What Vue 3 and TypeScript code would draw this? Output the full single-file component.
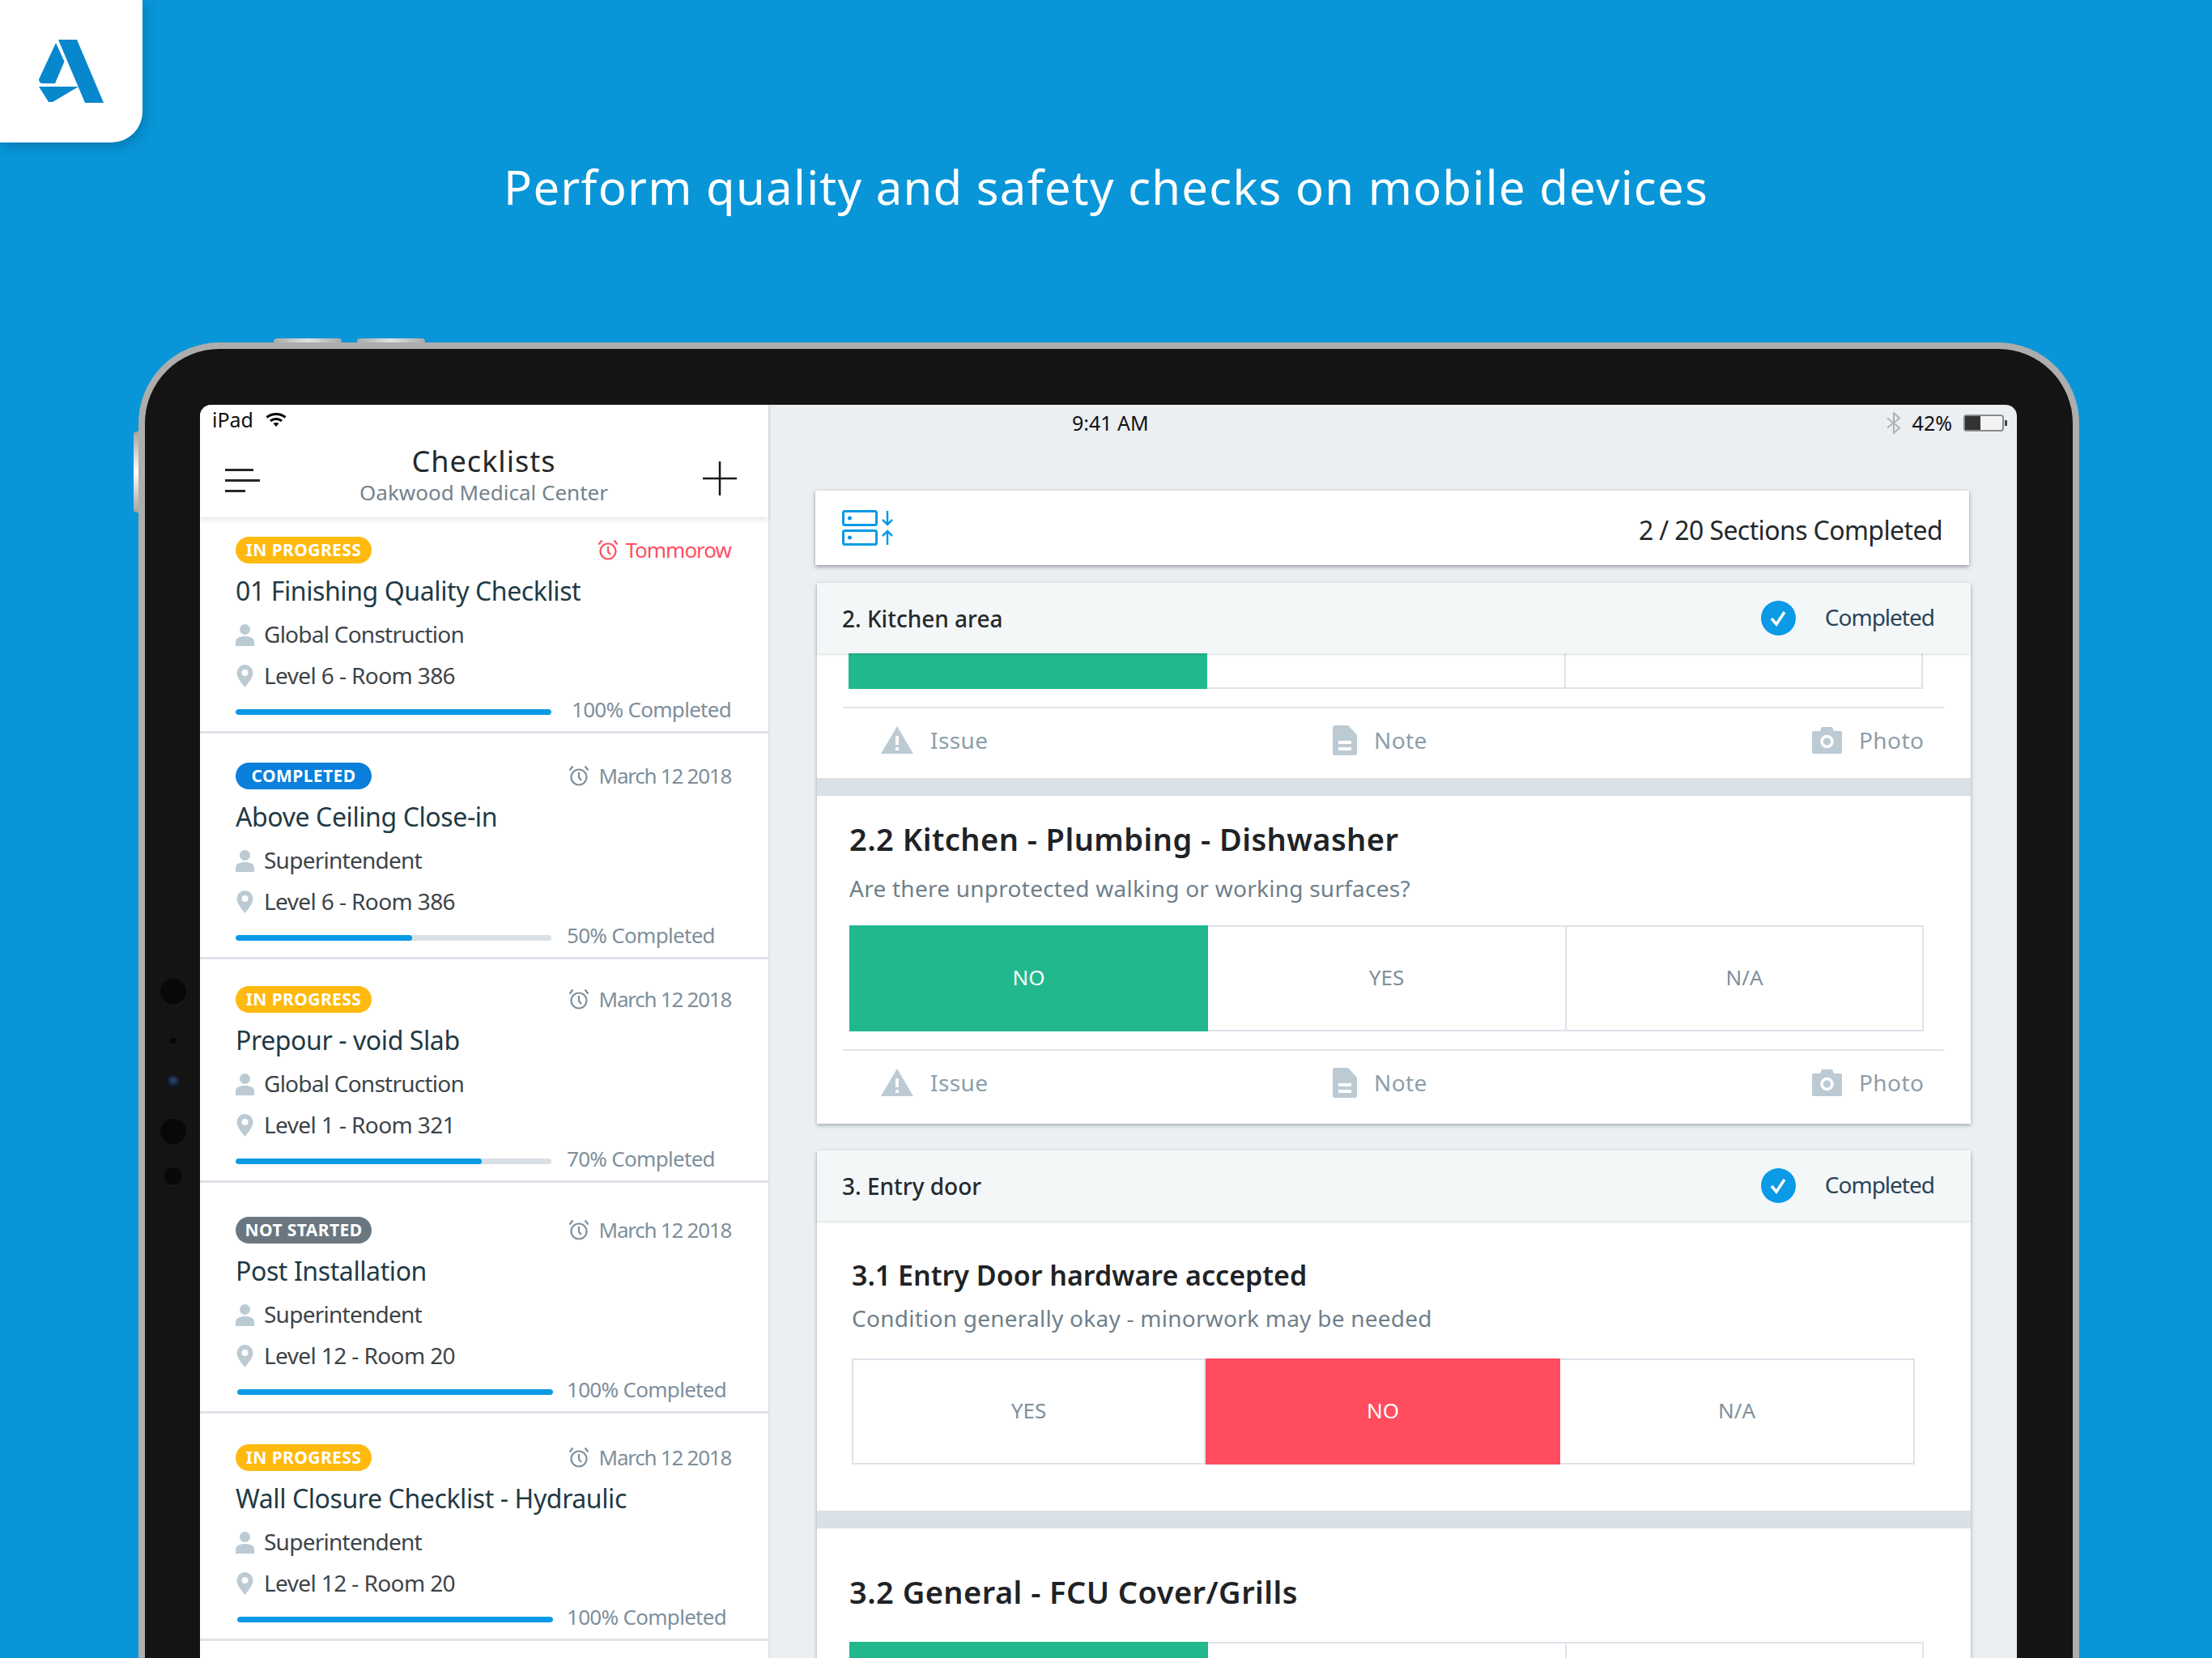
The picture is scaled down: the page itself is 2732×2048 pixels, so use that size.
<template>
  <div class="page">
    <div class="logo-card">
      <svg viewBox="0 0 176 176" width="176" height="176">
        <path d="M72 49H95L128 127H105Z" fill="#0787cc" />
        <path d="M69 53L79.500 76L68 103H53Q48 103 48 98Z" fill="#0787cc" />
        <path d="M48 107H97L65 126H60Z" fill="#0787cc" />
      </svg>
    </div>

    <h1 class="headline">Perform quality and safety checks on mobile devices</h1>

    <div class="device">
      <span class="hw-btn hw-btn-a"></span>
      <span class="hw-btn hw-btn-b"></span>
      <span class="hw-side"></span>
      <span class="dot dot-a"></span>
      <span class="dot dot-b"></span>
      <span class="dot dot-c"></span>
      <span class="dot dot-d"></span>
      <span class="dot dot-e"></span>

      <div class="screen">
        <div class="status">
          <div class="status-left">
            <span>iPad</span>
            <svg width="26" height="18" viewBox="0 0 26 18" fill="none" stroke="#000" stroke-width="3">
              <path d="M1.500 6.500C8 1 18 1 24.500 6.500" />
              <path d="M6 11C10 7.500 16 7.500 20 11" />
              <path d="M13 18L9.500 14C11.500 12.500 14.500 12.500 16.500 14Z" fill="#000" stroke="none" />
            </svg>
          </div>
          <div class="status-time">9:41 AM</div>
          <div class="status-right">
            <svg width="18" height="27" viewBox="0 0 18 27" fill="none" stroke="#aeb2b5" stroke-width="2">
              <path d="M1 7.500L16 19.500L9 26V1L16 7.500L1 19.500" />
            </svg>
            <span>42%</span>
            <div class="battery"><span class="battery-fill"></span></div>
          </div>
        </div>

        <aside class="list-panel">
          <header class="list-head">
            <div class="menu-icon">
              <span class="m1"></span>
              <span class="m2"></span>
              <span class="m3"></span>
            </div>
            <div class="list-titles">
              <div class="list-title">Checklists</div>
              <div class="list-sub">Oakwood Medical Center</div>
            </div>
            <svg class="plus" width="42" height="42" viewBox="0 0 42 42" stroke="#15191c" stroke-width="2.500">
              <path d="M21 0V42M0 21H42" />
            </svg>
          </header>

          <div
            v-for="item in checklists"
            :key="item.title"
            class="row"
            :style="{ paddingTop: item.pad + 'px' }"
          >
            <div class="row-top">
              <span class="badge" :class="item.state">{{ item.label }}</span>
              <span class="due" :class="{ late: item.late }">
                <svg width="26" height="26" viewBox="0 0 26 26" fill="none" stroke="currentColor" stroke-width="2.200">
                  <circle cx="13" cy="15" r="9.500" />
                  <path d="M13 9V15.500L16 19" />
                  <path d="M1.500 6.500L5.500 1.500M24.500 6.500L20.500 1.500" />
                </svg>
                {{ item.due }}
              </span>
            </div>
            <div class="row-title">{{ item.title }}</div>
            <div class="meta owner">
              <svg width="23" height="27" viewBox="0 0 23 27" fill="#bccad4">
                <circle cx="11.500" cy="6.500" r="6.500" />
                <path d="M0 27V22C0 17 5 15 11.500 15S23 17 23 22V27Z" />
              </svg>
              <span>{{ item.owner }}</span>
            </div>
            <div class="meta">
              <svg width="23" height="28" viewBox="0 0 23 28">
                <path
                  d="M11.500 28C7 22 1.500 16 1.500 10A10 10 0 0 1 21.500 10C21.500 16 16 22 11.500 28Z"
                  fill="#bccad4"
                />
                <circle cx="11.500" cy="10" r="4" fill="#fff" />
              </svg>
              <span>{{ item.place }}</span>
            </div>
            <div class="progress-row" :class="{ shifted: item.shifted }">
              <div class="track"><div class="fill" :style="{ width: item.fill + '%' }"></div></div>
              <span class="pct" :class="{ wide: item.wideGap }">{{ item.pct }}</span>
            </div>
          </div>
        </aside>

        <main class="detail">
          <div class="summary">
            <svg width="63" height="44" viewBox="0 0 63 44" fill="none" stroke="#0a9ae6" stroke-width="2.500">
              <rect x="1.500" y="1.500" width="41" height="17" rx="2" stroke-width="3" />
              <rect x="1.500" y="25.500" width="41" height="17" rx="2" stroke-width="3" />
              <circle cx="9.500" cy="10" r="2.500" fill="#0a9ae6" stroke="none" />
              <circle cx="9.500" cy="34" r="2.500" fill="#0a9ae6" stroke="none" />
              <path d="M56 1V18M50 12L56 18L62 12" />
              <path d="M56 43V26M50 32L56 26L62 32" />
            </svg>
            <span class="summary-text">2 / 20 Sections Completed</span>
          </div>

          <section class="card kitchen">
            <div class="card-head">
              <span class="card-name">2. Kitchen area</span>
              <span class="done-icon">
                <svg width="43" height="43" viewBox="0 0 43 43">
                  <circle cx="21.500" cy="21.500" r="21.500" fill="#0a9ae6" />
                  <path d="M13 22L19 29L29 14" fill="none" stroke="#fff" stroke-width="3.500" />
                </svg>
              </span>
              <span class="done-text">Completed</span>
            </div>

            <div class="options options-stub">
              <div class="opt green"></div>
              <div class="opt"></div>
              <div class="opt"></div>
            </div>
            <div class="actions">
              <span class="act">
                <svg width="40" height="34" viewBox="0 0 40 34">
                  <path d="M20 0L40 34H0Z" fill="#bccad4" />
                  <path d="M18 12H22V23H18ZM18 26H22V30H18Z" fill="#fff" />
                </svg>
                Issue
              </span>
              <span class="act">
                <svg width="30" height="37" viewBox="0 0 30 37">
                  <path d="M3 0H19L30 12V34Q30 37 27 37H3Q0 37 0 34V3Q0 0 3 0Z" fill="#bccad4" />
                  <path d="M7 19H23V23H7ZM7 27H23V31H7Z" fill="#fff" />
                </svg>
                Note
              </span>
              <span class="act">
                <svg width="37" height="33" viewBox="0 0 37 33">
                  <path d="M2 5H10L12 0H25L27 5H35Q37 5 37 7V31Q37 33 35 33H2Q0 33 0 31V7Q0 5 2 5Z" fill="#bccad4" />
                  <circle cx="18.500" cy="18" r="6.500" fill="none" stroke="#fff" stroke-width="3.500" />
                </svg>
                Photo
              </span>
            </div>

            <div class="band band-first"></div>
            <h2 class="q-title">2.2 Kitchen - Plumbing - Dishwasher</h2>
            <p class="q-sub">Are there unprotected walking or working surfaces?</p>
            <div class="options">
              <div class="opt green">NO</div>
              <div class="opt">YES</div>
              <div class="opt">N/A</div>
            </div>
            <div class="actions">
              <span class="act">
                <svg width="40" height="34" viewBox="0 0 40 34">
                  <path d="M20 0L40 34H0Z" fill="#bccad4" />
                  <path d="M18 12H22V23H18ZM18 26H22V30H18Z" fill="#fff" />
                </svg>
                Issue
              </span>
              <span class="act">
                <svg width="30" height="37" viewBox="0 0 30 37">
                  <path d="M3 0H19L30 12V34Q30 37 27 37H3Q0 37 0 34V3Q0 0 3 0Z" fill="#bccad4" />
                  <path d="M7 19H23V23H7ZM7 27H23V31H7Z" fill="#fff" />
                </svg>
                Note
              </span>
              <span class="act">
                <svg width="37" height="33" viewBox="0 0 37 33">
                  <path d="M2 5H10L12 0H25L27 5H35Q37 5 37 7V31Q37 33 35 33H2Q0 33 0 31V7Q0 5 2 5Z" fill="#bccad4" />
                  <circle cx="18.500" cy="18" r="6.500" fill="none" stroke="#fff" stroke-width="3.500" />
                </svg>
                Photo
              </span>
            </div>
          </section>

          <section class="card entry">
            <div class="card-head">
              <span class="card-name">3. Entry door</span>
              <span class="done-icon">
                <svg width="43" height="43" viewBox="0 0 43 43">
                  <circle cx="21.500" cy="21.500" r="21.500" fill="#0a9ae6" />
                  <path d="M13 22L19 29L29 14" fill="none" stroke="#fff" stroke-width="3.500" />
                </svg>
              </span>
              <span class="done-text">Completed</span>
            </div>

            <h2 class="q-title small">3.1 Entry Door hardware accepted</h2>
            <p class="q-sub indented">Condition generally okay - minorwork may be needed</p>
            <div class="options options-entry">
              <div class="opt">YES</div>
              <div class="opt red">NO</div>
              <div class="opt">N/A</div>
            </div>

            <div class="band band-entry"></div>
            <h2 class="q-title last">3.2 General - FCU Cover/Grills</h2>
            <div class="options">
              <div class="opt green"></div>
              <div class="opt"></div>
              <div class="opt"></div>
            </div>
          </section>
        </main>
      </div>
    </div>
  </div>
</template>

<script setup lang="ts">
interface Checklist {
  state: string;
  label: string;
  due: string;
  late?: boolean;
  title: string;
  owner: string;
  place: string;
  fill: number;
  pct: string;
  pad: number;
  shifted?: boolean;
  wideGap?: boolean;
}

const checklists: Checklist[] = [
  {
    state: "amber",
    label: "IN PROGRESS",
    due: "Tommorow",
    late: true,
    title: "01 Finishing Quality Checklist",
    owner: "Global Construction",
    place: "Level 6 - Room 386",
    fill: 100,
    pct: "100% Completed",
    pad: 24,
    wideGap: true,
  },
  {
    state: "blue",
    label: "COMPLETED",
    due: "March 12 2018",
    title: "Above Ceiling Close-in",
    owner: "Superintendent",
    place: "Level 6 - Room 386",
    fill: 56,
    pct: "50% Completed",
    pad: 36,
  },
  {
    state: "amber",
    label: "IN PROGRESS",
    due: "March 12 2018",
    title: "Prepour - void Slab",
    owner: "Global Construction",
    place: "Level 1 - Room 321",
    fill: 78,
    pct: "70% Completed",
    pad: 33,
  },
  {
    state: "grey",
    label: "NOT STARTED",
    due: "March 12 2018",
    title: "Post Installation",
    owner: "Superintendent",
    place: "Level 12 - Room 20",
    fill: 100,
    pct: "100% Completed",
    pad: 42,
    shifted: true,
  },
  {
    state: "amber",
    label: "IN PROGRESS",
    due: "March 12 2018",
    title: "Wall Closure Checklist - Hydraulic",
    owner: "Superintendent",
    place: "Level 12 - Room 20",
    fill: 100,
    pct: "100% Completed",
    pad: 38,
    shifted: true,
  },
];
</script>

<style scoped>
.page {
  position: relative;
  width: 2732px;
  height: 2048px;
  overflow: hidden;
  background: #0896d8;
  font-family: "Noto Sans", "Open Sans", sans-serif;
  display: flex;
  flex-direction: column;
}
.logo-card {
  position: absolute;
  left: 0;
  top: 0;
  width: 176px;
  height: 176px;
  background: #fff;
  border-bottom-right-radius: 38px;
  box-shadow: 3px 5px 14px rgba(0, 60, 100, 0.3);
}
.headline {
  margin: 0;
  padding-top: 191px;
  height: 423px;
  flex: none;
  box-sizing: border-box;
  text-align: center;
  color: #fff;
  font-size: 58px;
  line-height: 80px;
  font-weight: 400;
  letter-spacing: 1.25px;
}
.device {
  position: relative;
  flex: none;
  width: 2397px;
  height: 1625px;
  margin-left: 171px;
  box-sizing: border-box;
  border: 8px solid #adadad;
  border-bottom: none;
  border-radius: 100px 100px 0 0;
  background: #141414;
  padding: 69px 69px 0 68px;
}
.hw-btn {
  position: absolute;
  top: -13px;
  width: 84px;
  height: 5px;
  border-radius: 4px 4px 0 0;
  background: linear-gradient(90deg, #a9a9a9, #e2e2e2 50%, #a9a9a9);
}
.hw-btn-a {
  left: 159px;
}
.hw-btn-b {
  left: 262px;
}
.hw-side {
  position: absolute;
  left: -14px;
  top: 102px;
  width: 6px;
  height: 100px;
  border-radius: 4px 0 0 4px;
  background: linear-gradient(180deg, #a3a3a3, #ffffff 50%, #a3a3a3);
}
.dot {
  position: absolute;
  border-radius: 50%;
  background: #080808;
  box-shadow: 0 1px 1px #222;
}
.dot-a {
  left: 19px;
  top: 778px;
  width: 32px;
  height: 32px;
}
.dot-b {
  left: 31px;
  top: 851px;
  width: 8px;
  height: 8px;
}
.dot-c {
  left: 27px;
  top: 898px;
  width: 16px;
  height: 16px;
  background: radial-gradient(circle at 50% 35%, #2b4a77, #0b0f16 70%);
}
.dot-d {
  left: 19px;
  top: 951px;
  width: 32px;
  height: 32px;
}
.dot-e {
  left: 24px;
  top: 1011px;
  width: 22px;
  height: 22px;
}
.screen {
  position: relative;
  height: 100%;
  display: flex;
  background: #ebeff2;
  border-radius: 14px 14px 0 0;
  overflow: hidden;
}
.status {
  position: absolute;
  left: 0;
  right: 0;
  top: 0;
  height: 44px;
  z-index: 2;
  color: #111;
  font-size: 25px;
}
.status-left {
  position: absolute;
  left: 15px;
  top: 0;
  line-height: 36px;
  display: flex;
  align-items: center;
  gap: 15px;
}
.status-time {
  position: absolute;
  left: 1077px;
  top: 4px;
  line-height: 36px;
  font-size: 25px;
}
.status-right {
  position: absolute;
  right: 16px;
  top: 4px;
  line-height: 36px;
  display: flex;
  align-items: center;
  gap: 14px;
}
.battery {
  position: relative;
  width: 50px;
  height: 21px;
  box-sizing: border-box;
  border: 2px solid #8a8a8a;
  border-radius: 4px;
  background: #f1f3f5;
}
.battery::after {
  content: "";
  position: absolute;
  right: -6px;
  top: 5px;
  width: 3px;
  height: 7px;
  background: #444;
}
.battery-fill {
  display: block;
  width: 19px;
  height: 100%;
  background: #333;
}

.list-panel {
  width: 704px;
  flex: none;
  background: #fff;
  border-right: 2px solid #dde2e7;
  box-sizing: border-box;
}
.list-head {
  position: relative;
  height: 139px;
  display: flex;
  align-items: flex-end;
  justify-content: space-between;
  padding: 0 39px 14px 31px;
  box-sizing: border-box;
  box-shadow: 0 3px 6px rgba(40, 60, 80, 0.12);
}
.menu-icon {
  width: 43px;
  margin-bottom: 17px;
  display: flex;
  flex-direction: column;
  gap: 10px;
}
.menu-icon span {
  display: block;
  height: 3px;
  background: #23282c;
}
.m1 {
  width: 35px;
}
.m2 {
  width: 43px;
}
.m3 {
  width: 25px;
}
.list-titles {
  text-align: center;
  margin-left: 6px;
}
.list-title {
  font-size: 36px;
  line-height: 46px;
  color: #23282c;
  letter-spacing: 1px;
  margin-top: -2px;
}
.list-sub {
  font-size: 26px;
  line-height: 33px;
  color: #74838e;
  margin-top: -1px;
}
.plus {
  margin-bottom: 13px;
}
.row {
  padding: 0 44px 9px 44px;
  border-bottom: 3px solid #dde2e8;
}
.row-top {
  height: 33px;
  display: flex;
  align-items: center;
  justify-content: space-between;
}
.badge {
  width: 168px;
  height: 33px;
  border-radius: 17px;
  text-align: center;
  line-height: 33px;
  color: #fff;
  font-size: 21px;
  font-weight: 700;
  letter-spacing: 0.4px;
}
.amber {
  background: #ffb90f;
}
.blue {
  background: #0a7fdc;
}
.grey {
  background: #6a7780;
}
.due {
  display: flex;
  align-items: center;
  gap: 12px;
  margin: -2px 2px 0 0;
  font-size: 26px;
  letter-spacing: -1.25px;
  color: #7e8f9c;
}
.due.late {
  gap: 8px;
  letter-spacing: -1px;
  color: #ff4f60;
}
.row-title {
  margin-top: 14px;
  height: 40px;
  line-height: 40px;
  font-size: 32px;
  letter-spacing: -0.4px;
  color: #1f3a45;
}
.meta {
  margin-top: 17px;
  height: 34px;
  display: flex;
  align-items: center;
  gap: 12px;
  font-size: 28px;
  letter-spacing: -0.6px;
  color: #3c4449;
}
.meta span {
  margin-top: -2px;
}
.meta.owner {
  letter-spacing: -0.75px;
}
.progress-row {
  margin-top: 12px;
  height: 30px;
  display: flex;
  align-items: center;
}
.progress-row.shifted {
  margin-left: 2px;
}
.progress-row.shifted .pct {
  margin-left: 17px;
}
.track {
  flex: none;
  width: 390px;
  height: 7px;
  border-radius: 4px;
  background: #d9e0e6;
  overflow: hidden;
}
.fill {
  height: 100%;
  background: #0a9ae6;
  border-radius: 4px;
}
.pct {
  margin-left: 19px;
  font-size: 26px;
  letter-spacing: -0.7px;
  white-space: nowrap;
  color: #7e8f9c;
  margin-top: -7px;
}
.pct.wide {
  margin-left: 25px;
}

.detail {
  flex: 1;
  min-width: 0;
  padding: 106px 0 0 56px;
}
.summary {
  width: 1425px;
  height: 92px;
  box-sizing: border-box;
  padding: 0 33px 0 33px;
  background: #fff;
  display: flex;
  align-items: center;
  justify-content: space-between;
  box-shadow: 0 2px 5px rgba(30, 40, 50, 0.45);
}
.summary-text {
  margin-top: 4px;
  font-size: 32px;
  letter-spacing: -0.6px;
  color: #23282c;
}
.card {
  width: 1425px;
  margin-left: 2px;
  background: #fff;
  box-shadow: 0 2px 5px rgba(30, 40, 50, 0.35);
}
.kitchen {
  margin-top: 22px;
  padding-bottom: 12px;
}
.entry {
  margin-top: 33px;
}
.card-head {
  height: 87px;
  display: flex;
  align-items: center;
  padding: 0 45px 0 31px;
  background: #f4f7f8;
  box-shadow: 0 2px 2px rgba(40, 50, 60, 0.12);
  position: relative;
}
.card-name {
  flex: 1;
  font-size: 28px;
  font-weight: 500;
  color: #25292c;
}
.done-text {
  margin: -3px 0 0 36px;
  font-size: 28px;
  letter-spacing: -1px;
  color: #2a4558;
}
.done-icon {
  display: flex;
}
.options {
  display: grid;
  grid-template-columns: 443px 443px 441px;
  height: 131px;
  margin: 26px 0 0 40px;
  width: 1327px;
}
.opt {
  display: flex;
  align-items: center;
  justify-content: center;
  box-sizing: border-box;
  border: 2px solid #dde3e9;
  border-left: none;
  padding-bottom: 3px;
  font-size: 26px;
  color: #7e8f9c;
}
.opt:first-child {
  border-left: 2px solid #dde3e9;
}
.opt.green {
  background: #22b88d;
  border: none;
  color: #fff;
}
.opt.red {
  background: #ff4c5f;
  border: none;
  color: #fff;
}
.options-stub {
  height: 44px;
  margin-top: 0;
  margin-left: 39px;
}
.options-stub .opt {
  border-top: none;
}
.options-entry {
  grid-template-columns: 437px 438px 438px;
  width: 1313px;
  margin: 30px 0 0 43px;
}
.actions {
  display: grid;
  grid-template-columns: 558px 592px auto;
  align-items: center;
  height: 80px;
  margin: 22px 33px 0 32px;
  padding-left: 47px;
  border-top: 2px solid #e1e6eb;
  box-sizing: border-box;
}
.act {
  display: inline-flex;
  align-items: center;
  gap: 21px;
  font-size: 28px;
  letter-spacing: 0.4px;
  color: #8d9ea9;
}
.band {
  height: 22px;
  background: #d9e0e6;
}
.band-first {
  margin-top: 8px;
}
.band-entry {
  margin-top: 57px;
}
.q-title {
  margin: 29px 0 0 40px;
  font-size: 38px;
  line-height: 48px;
  font-weight: 600;
  letter-spacing: 0.45px;
  color: #1f2326;
}
.q-title.small {
  margin: 45px 0 0 43px;
  font-size: 34px;
  line-height: 44px;
  letter-spacing: 0;
}
.q-title.last {
  margin-top: 54px;
}
.q-title.last + .options {
  margin-top: 38px;
}
.q-sub {
  margin: 17px 0 0 40px;
  font-size: 28px;
  line-height: 40px;
  letter-spacing: 0.25px;
  color: #6f7f8b;
}
.q-sub.indented {
  margin: 11px 0 0 43px;
}
</style>
